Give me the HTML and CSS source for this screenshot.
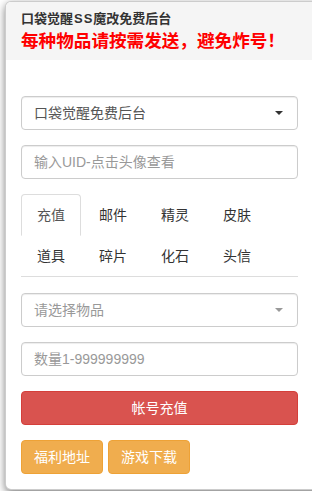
FILE: index.html
```html
<!DOCTYPE html>
<html lang="zh-CN">
<head>
<meta charset="utf-8">
<title>口袋觉醒SS魔改免费后台</title>
<link rel="stylesheet" href="styles.css">
</head>
<body>
<div class="card">
  <div class="card-head">
    <div class="title">口袋觉醒<span class="ss">SS</span>魔改免费后台</div>
    <div class="warn">每种物品请按需发送，避免炸号！</div>
  </div>
  <div class="card-body">
    <div class="group">
      <div class="control select"><span class="val">口袋觉醒免费后台</span><span class="caret"></span></div>
    </div>
    <div class="group">
      <div class="control"><span class="ph">输入UID-点击头像查看</span></div>
    </div>
    <ul class="tabs">
      <li><a class="active">充值</a></li>
      <li><a>邮件</a></li>
      <li><a>精灵</a></li>
      <li><a>皮肤</a></li>
      <li><a>道具</a></li>
      <li><a>碎片</a></li>
      <li><a>化石</a></li>
      <li><a>头信</a></li>
    </ul>
    <div class="group">
      <div class="control select"><span class="ph">请选择物品</span><span class="caret light"></span></div>
    </div>
    <div class="group">
      <div class="control"><span class="ph">数量1-999999999</span></div>
    </div>
    <div class="group">
      <div class="btn btn-danger btn-block">帐号充值</div>
    </div>
    <div class="btn-row">
      <div class="btn btn-warning">福利地址</div>
      <div class="btn btn-warning">游戏下载</div>
    </div>
  </div>
</div>
</body>
</html>
```
FILE: styles.css
```css
html, body {
  margin: 0;
  padding: 0;
  overflow: hidden;
  background: #fff;
}
body {
  font-family: "Liberation Sans", "Noto Sans CJK SC", sans-serif;
  font-size: 14px;
  color: #333;
  width: 312px;
  height: 491px;
}
.card {
  margin: 1px 0 0 5px;
  width: 324px;
  height: 489px;
  box-sizing: border-box;
  border: 1px solid rgba(0,0,0,.2);
  border-radius: 6px;
  box-shadow: 0 3px 9px rgba(0,0,0,.5);
  background: #fff;
  overflow: hidden;
}
.card-head {
  background: #f5f5f5;
  padding: 8px 15px 6px;
  height: 58px;
  box-sizing: border-box;
}
.title {
  font-size: 13px;
  font-weight: bold;
  line-height: 18px;
  color: #333;
}
.ss {
  letter-spacing: 1px;
  margin-left: 1px;
}
.warn {
  font-size: 17.6px;
  font-weight: bold;
  line-height: 26px;
  color: #f00;
}
.card-body {
  padding: 36px 15px 15px;
  width: 307px;
  box-sizing: border-box;
}
.group {
  margin-bottom: 15px;
}
.control {
  height: 34px;
  box-sizing: border-box;
  border: 1px solid #ccc;
  border-radius: 4px;
  padding: 0 12px;
  display: flex;
  align-items: center;
  justify-content: space-between;
  line-height: 20px;
  background: #fff;
  box-shadow: inset 0 1px 1px rgba(0,0,0,.075);
}
.val { color: #555; }
.ph { color: #999; }
.caret {
  width: 0;
  height: 0;
  border-left: 4px solid transparent;
  border-right: 4px solid transparent;
  border-top: 4px solid #333;
  margin-right: 2px;
}
.caret.light { border-top-color: #999; }
.tabs {
  list-style: none;
  margin: 0 0 16px;
  padding: 0;
  display: flex;
  flex-wrap: wrap;
  border-bottom: 1px solid #ddd;
}
.tabs li {
  margin-bottom: -1px;
}
.tabs a {
  display: block;
  margin-right: 2px;
  padding: 10px 15px;
  line-height: 20px;
  border: 1px solid transparent;
  border-radius: 4px 4px 0 0;
  color: #333;
}
.tabs a.active {
  border-color: #ddd #ddd transparent;
  background: #fff;
  color: #555;
}
.btn {
  display: inline-block;
  box-sizing: border-box;
  height: 34px;
  padding: 6px 12px;
  line-height: 20px;
  border: 1px solid transparent;
  border-radius: 4px;
  color: #fff;
  text-align: center;
}
.btn-block { display: block; }
.btn-danger {
  background: #d9534f;
  border-color: #d43f3a;
}
.btn-warning {
  background: #f0ad4e;
  border-color: #eea236;
}
.btn-row {
  display: flex;
  gap: 5px;
}
```
